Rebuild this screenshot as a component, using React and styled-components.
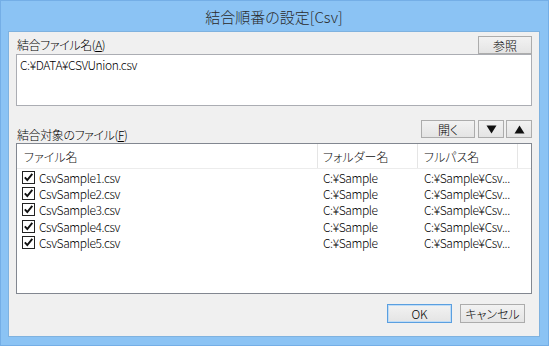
import React from 'react';
import styled, { createGlobalStyle } from 'styled-components';

const files = [1, 2, 3, 4, 5].map((n) => ({
  name: `CsvSample${n}.csv`,
  folder: 'C:¥Sample',
  path: `C:¥Sample¥CsvSample${n}.csv`,
  checked: true,
}));

// the list view shows long paths cut to what fits its column
const shorten = (text, max = 13) => (text.length > max ? `${text.slice(0, max)}...` : text);

const GlobalStyle = createGlobalStyle`
  html, body {
    margin: 0;
    padding: 0;
    background: #ffffff;
    overflow: hidden;
  }
  * {
    box-sizing: border-box;
  }
`;

function Check() {
  return (
    <svg width="11" height="11" viewBox="0 0 11 11">
      <path d="M1.8 5.4 L4.3 8 L9.3 1.8" fill="none" stroke="#111" strokeWidth="1.9" />
    </svg>
  );
}

function Arrow({ up }) {
  return (
    <svg width="11" height="9" viewBox="0 0 11 9">
      {up ? <polygon points="5.5,0.5 10.5,8.5 0.5,8.5" fill="#111" /> : <polygon points="0.5,0.5 10.5,0.5 5.5,8.5" fill="#111" />}
    </svg>
  );
}

function App() {
  return (
    <>
      <GlobalStyle />
      <Window>
        <TitleBar>結合順番の設定[Csv]</TitleBar>
        <Panel>
          <FieldHeader>
            <Label>
              結合ファイル名(<u>A</u>)
            </Label>
            <Button $width={54}>参照</Button>
          </FieldHeader>
          <TextBox>C:¥DATA¥CSVUnion.csv</TextBox>

          <FieldHeader $spaced>
            <Label $low>
              結合対象のファイル(<u>F</u>)
            </Label>
            <ButtonGroup>
              <Button $width={54}>開く</Button>
              <Button $width={26} $gap={3}>
                <Arrow />
              </Button>
              <Button $width={26} $gap={2}>
                <Arrow up />
              </Button>
            </ButtonGroup>
          </FieldHeader>

          <ListBox>
            <ListHeader>
              <HeaderCell $pad={7}>ファイル名</HeaderCell>
              <HeaderCell $pad={5}>フォルダー名</HeaderCell>
              <HeaderCell $pad={6}>フルパス名</HeaderCell>
              <HeaderCell $last />
            </ListHeader>
            {files.map((f) => (
              <Row key={f.name}>
                <NameCell>
                  <CheckBox>{f.checked && <Check />}</CheckBox>
                  <span>{f.name}</span>
                </NameCell>
                <Cell $pad={5}>{f.folder}</Cell>
                <Cell $pad={6}>{shorten(f.path)}</Cell>
              </Row>
            ))}
          </ListBox>

          <Footer>
            <Button $width={65} $tall $default>
              OK
            </Button>
            <Button $width={65} $tall $gap={8}>
              キャンセル
            </Button>
          </Footer>
        </Panel>
      </Window>
    </>
  );
}

export default App;

const Window = styled.div`
  width: 549px;
  height: 346px;
  display: flex;
  flex-direction: column;
  padding: 0 9px 9px 8px;
  background: #8bc3f4;
  box-shadow: inset 0 0 0 1px #74aee6;
  font-family: 'Noto Sans CJK JP', 'Noto Sans', sans-serif;
  font-weight: 300;
  color: #000;
`;

const TitleBar = styled.div`
  height: 31px;
  display: flex;
  align-items: center;
  justify-content: center;
  padding-top: 1px;
  font-size: 15px;
  color: #2a2a2a;
  font-feature-settings: 'palt';
`;

const Panel = styled.div`
  flex: 1;
  display: flex;
  flex-direction: column;
  padding: 4px 7px 0 7px;
  background: #f0f0f0;
  border: 1px solid #7fb2df;
`;

const FieldHeader = styled.div`
  display: flex;
  align-items: ${(p) => (p.$spaced ? 'flex-end' : 'center')};
  justify-content: space-between;
  height: 18px;
  margin-top: ${(p) => (p.$spaced ? '14px' : '0')};
  margin-bottom: ${(p) => (p.$spaced ? '5px' : '0')};
`;

const Label = styled.div`
  padding-left: 1px;
  font-size: 12px;
  line-height: 14px;
  margin-bottom: ${(p) => (p.$low ? '-4px' : '0')};
  font-feature-settings: 'palt';
  letter-spacing: -0.4px;

  u {
    text-underline-offset: 1px;
  }
`;

const ButtonGroup = styled.div`
  display: flex;
`;

const Button = styled.button`
  width: ${(p) => p.$width}px;
  height: ${(p) => (p.$tall ? 19 : 18)}px;
  margin: 0 0 0 ${(p) => p.$gap || 0}px;
  padding: 0;
  display: flex;
  align-items: center;
  justify-content: center;
  font-family: 'Noto Sans CJK JP', 'Noto Sans', sans-serif;
  font-weight: 300;
  font-size: 12px;
  color: #000;
  font-feature-settings: 'palt';
  border: 1px solid ${(p) => (p.$default ? '#5a9fe0' : '#acacac')};
  background: linear-gradient(#f2f2f2, #e4e4e4);
  box-shadow: ${(p) => (p.$default ? 'inset 0 0 0 1px #bfdcf6' : 'none')};
`;

const TextBox = styled.div`
  height: 52px;
  padding: 2px 3px;
  background: #fff;
  border: 1px solid #abadb3;
  font-size: 12px;
  line-height: 16px;
  letter-spacing: -0.4px;
`;

const ListBox = styled.div`
  height: 151px;
  background: #fff;
  border: 1px solid #828790;
  font-size: 12px;
`;

const ListHeader = styled.div`
  display: grid;
  grid-template-columns: 301px 100px 100px 1fr;
  height: 25px;
  border-bottom: 1px solid #ececec;
`;

const HeaderCell = styled.div`
  display: flex;
  align-items: center;
  padding: 1px 0 0 ${(p) => p.$pad || 0}px;
  border-right: ${(p) => (p.$last ? 'none' : '1px solid #e5e5e5')};
  font-feature-settings: 'palt';
  color: #111;
`;

const Row = styled.div`
  display: grid;
  grid-template-columns: 301px 100px 100px;
  height: 16.2px;
  align-items: center;
`;

const NameCell = styled.div`
  display: flex;
  align-items: center;
  gap: 4px;
  padding-left: 5px;
  letter-spacing: -0.4px;
`;

const CheckBox = styled.span`
  width: 13px;
  height: 13px;
  display: flex;
  align-items: center;
  justify-content: center;
  border: 1px solid #222;
  background: #fff;
`;

const Cell = styled.div`
  padding: 0 0 0 ${(p) => p.$pad}px;
  white-space: nowrap;
  overflow: hidden;
  letter-spacing: -0.4px;
`;

const Footer = styled.div`
  display: flex;
  justify-content: flex-end;
  margin-top: 10px;
  padding-right: 7px;
`;
